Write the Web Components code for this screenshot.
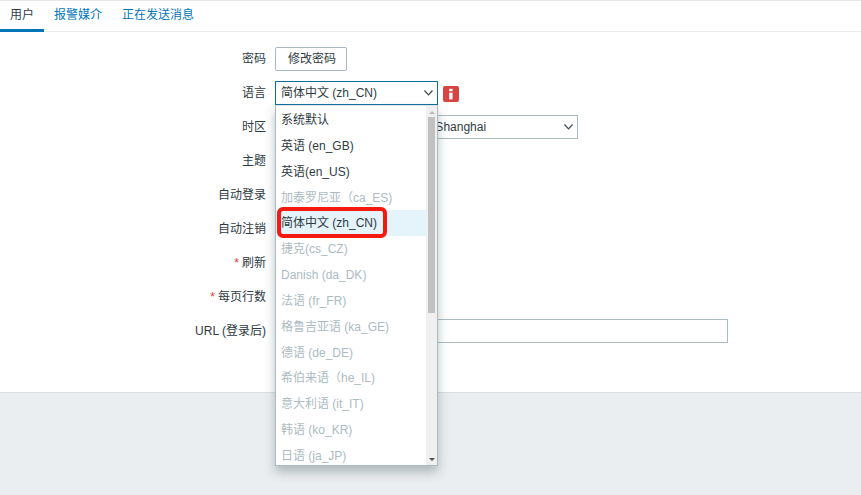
<!DOCTYPE html>
<html lang="zh">
<head>
<meta charset="utf-8">
<style>
  html, body { margin: 0; height: 100%; }
  body {
    height: 495px;
    overflow: hidden;
    display: flex;
    flex-direction: column;
    font: 12px "Liberation Sans", "Noto Sans CJK SC", sans-serif;
    color: #2f3b42;
    background: #ebeef0;
  }
</style>
</head>
<body>
<tab-bar>
  <tab-item active>用户</tab-item>
  <tab-item>报警媒介</tab-item>
  <tab-item>正在发送消息</tab-item>
</tab-bar>
<user-form>
  <form-row label="密码"><plain-button>修改密码</plain-button></form-row>
  <form-row label="语言">
    <select-box value="简体中文 (zh_CN)" width="163" focused></select-box>
    <info-badge></info-badge>
    <lang-list slot="overlay"></lang-list>
  </form-row>
  <form-row label="时区"><select-box value="系统默认: (UTC+08:00) Asia/Shanghai" width="303"></select-box></form-row>
  <form-row label="主题"></form-row>
  <form-row label="自动登录"></form-row>
  <form-row label="自动注销"></form-row>
  <form-row label="刷新" required></form-row>
  <form-row label="每页行数" required></form-row>
  <form-row label="URL (登录后)"><text-box></text-box></form-row>
</user-form>
<script>
class TabBar extends HTMLElement {
  constructor() {
    super();
    this.attachShadow({ mode: "open" }).innerHTML = `
      <style>
        :host {
          display: flex;
          flex: none;
          height: 30px;
          background: #fff;
          border-top: 1px solid #e4e8ea;
          border-bottom: 1px solid #ebeef0;
        }
      </style>
      <slot></slot>`;
  }
}

class TabItem extends HTMLElement {
  constructor() {
    super();
    this.attachShadow({ mode: "open" }).innerHTML = `
      <style>
        :host {
          display: block;
          box-sizing: border-box;
          height: 31px;
          padding: 6px 10px 0;
          line-height: 17px;
          color: #0275b8;
        }
        :host([active]) {
          color: #2f3b42;
          border-bottom: 3px solid #0275b8;
        }
      </style>
      <slot></slot>`;
  }
}

class UserForm extends HTMLElement {
  constructor() {
    super();
    this.attachShadow({ mode: "open" }).innerHTML = `
      <style>
        :host {
          display: flex;
          flex-direction: column;
          gap: 10px;
          flex: none;
          box-sizing: border-box;
          height: 361px;
          padding-top: 15px;
          background: #fff;
          border-bottom: 1px solid #d9dee0;
        }
      </style>
      <slot></slot>`;
  }
}

class FormRow extends HTMLElement {
  constructor() {
    super();
    this.attachShadow({ mode: "open" }).innerHTML = `
      <style>
        :host {
          display: grid;
          grid-template-columns: 266px 1fr;
          grid-template-rows: 24px;
          column-gap: 9px;
          height: 24px;
          position: relative;
        }
        .label { text-align: right; line-height: 25px; }
        .req { color: #e33734; margin-right: 3px; }
        .ctl { display: flex; align-items: center; gap: 9px; position: relative; }
      </style>
      <div class="label"><span class="req"></span><span class="txt"></span></div>
      <div class="ctl"><slot></slot><slot name="overlay"></slot></div>`;
  }

  connectedCallback() {
    this.shadowRoot.querySelector(".txt").textContent = this.getAttribute("label");
    if (this.hasAttribute("required")) {
      this.shadowRoot.querySelector(".req").textContent = "*";
    }
  }
}

class PlainButton extends HTMLElement {
  constructor() {
    super();
    this.attachShadow({ mode: "open" }).innerHTML = `
      <style>
        :host {
          display: block;
          box-sizing: border-box;
          width: 72px;
          height: 24px;
          padding-left: 12px;
          line-height: 23px;
          border: 1px solid #a9b8bf;
          border-radius: 2px;
          background: #fff;
        }
      </style>
      <slot></slot>`;
  }
}

class SelectBox extends HTMLElement {
  constructor() {
    super();
    this.attachShadow({ mode: "open" }).innerHTML = `
      <style>
        :host {
          display: flex;
          align-items: center;
          justify-content: space-between;
          box-sizing: border-box;
          height: 24px;
          padding: 0 4px 0 5px;
          border: 1px solid #acbbc2;
          background: #fff;
        }
        :host([focused]) { border-color: #0f6d9e; }
        .val { line-height: 22px; }
        svg { flex: none; }
      </style>
      <span class="val"></span>
      <svg width="9" height="6" viewBox="0 0 9 6">
        <path d="M0.5 0.5 L4.5 4.8 L8.5 0.5" fill="none" stroke="#3d4a52" stroke-width="1.2"/>
      </svg>`;
  }

  connectedCallback() {
    this.shadowRoot.querySelector(".val").textContent = this.getAttribute("value");
    this.style.width = this.getAttribute("width") + "px";
  }
}

class InfoBadge extends HTMLElement {
  constructor() {
    super();
    this.attachShadow({ mode: "open" }).innerHTML = `
      <style>
        :host {
          display: block;
          width: 16px;
          height: 16px;
          margin: 2px 0 0 -4px;
          border-radius: 2px;
          background: #d64541;
        }
        svg { display: block; }
      </style>
      <svg width="16" height="16" viewBox="0 0 16 16">
        <rect x="6.2" y="2.8" width="3.4" height="2.4" fill="#fff"/>
        <rect x="6.2" y="6.7" width="3.4" height="6.6" fill="#fff"/>
      </svg>`;
  }
}

class TextBox extends HTMLElement {
  constructor() {
    super();
    this.attachShadow({ mode: "open" }).innerHTML = `
      <style>
        :host {
          display: block;
          box-sizing: border-box;
          width: 453px;
          height: 24px;
          border: 1px solid #acbbc2;
          background: #fff;
        }
      </style>`;
  }
}

const LANGS = [
  ["系统默认", 1],
  ["英语 (en_GB)", 1],
  ["英语(en_US)", 1],
  ["加泰罗尼亚（ca_ES)", 0],
  ["简体中文 (zh_CN)", 1, "sel"],
  ["捷克(cs_CZ)", 0],
  ["Danish (da_DK)", 0],
  ["法语 (fr_FR)", 0],
  ["格鲁吉亚语 (ka_GE)", 0],
  ["德语 (de_DE)", 0],
  ["希伯来语（he_IL)", 0],
  ["意大利语 (it_IT)", 0],
  ["韩语 (ko_KR)", 0],
  ["日语 (ja_JP)", 0],
];

class LangList extends HTMLElement {
  constructor() {
    super();
    const items = LANGS.map(([name, on, sel]) =>
      `<div class="item ${on ? "" : "off"} ${sel || ""}">${name}</div>`).join("");
    this.attachShadow({ mode: "open" }).innerHTML = `
      <style>
        :host {
          position: absolute;
          left: 0;
          top: 24px;
          z-index: 5;
          display: flex;
          box-sizing: border-box;
          width: 163px;
          height: 361px;
          border: 1px solid #acbbc2;
          border-top-color: #dfe4e7;
          background: #fff;
          box-shadow: 0 6px 10px rgba(60, 80, 90, .35);
          overflow: hidden;
        }
        .list { flex: 1; min-width: 0; padding-top: 1px; }
        .item {
          height: 25.85px;
          padding-left: 5px;
          line-height: 27.85px;
          white-space: nowrap;
        }
        .off { color: #acbbc2; }
        .sel { background: #e5f3fb; }
        .bar {
          flex: none;
          position: relative;
          width: 11px;
          background: #f0f0f0;
        }
        .thumb {
          position: absolute;
          left: 2px;
          width: 7px;
          top: 11px;
          height: 196px;
          background: #c1c1c1;
        }
        .arr {
          position: absolute;
          left: 3px;
          width: 0;
          height: 0;
          border-left: 3px solid transparent;
          border-right: 3px solid transparent;
        }
        .up { top: 5px; border-bottom: 3px solid #b8b8b8; }
        .down { bottom: 4px; border-top: 3px solid #505050; }
        .mark {
          position: absolute;
          left: 1px;
          top: 101px;
          width: 110px;
          height: 31px;
          box-sizing: border-box;
          border: 4px solid #f5190f;
          border-radius: 6px;
        }
      </style>
      <div class="list">${items}</div>
      <div class="bar"><div class="arr up"></div><div class="thumb"></div><div class="arr down"></div></div>
      <div class="mark"></div>`;
  }
}

window.customElements.define("tab-bar", TabBar);
window.customElements.define("tab-item", TabItem);
window.customElements.define("user-form", UserForm);
window.customElements.define("form-row", FormRow);
window.customElements.define("plain-button", PlainButton);
window.customElements.define("select-box", SelectBox);
window.customElements.define("info-badge", InfoBadge);
window.customElements.define("text-box", TextBox);
window.customElements.define("lang-list", LangList);
</script>
</body>
</html>
